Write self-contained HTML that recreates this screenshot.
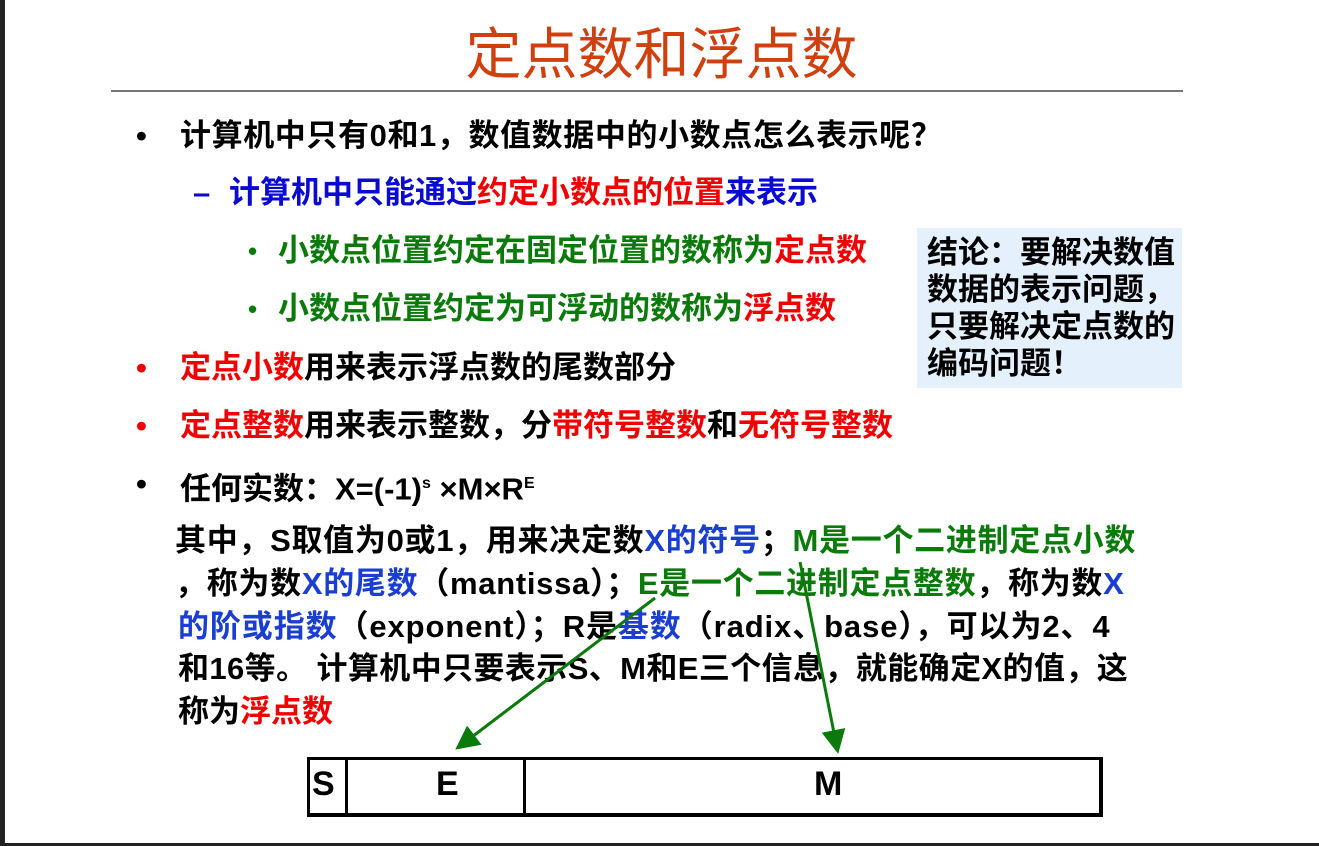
<!DOCTYPE html>
<html><head><meta charset="utf-8"><style>
html,body{margin:0;padding:0}
body{width:1319px;height:846px;background:#fff;position:relative;overflow:hidden;font-family:"Liberation Sans","Noto Sans CJK SC",sans-serif;font-weight:bold}
.l{position:absolute;white-space:nowrap;font-size:31px;line-height:40px}
.k{color:#000}.b{color:#0a0ad0}.r{color:#f00000}.g{color:#0a7a0a}.bl{color:#1a3fd0}
.t{position:absolute;left:0;width:1319px;text-align:center;top:20px;font-size:56px;line-height:70px;color:#d0400f;font-weight:normal}
</style></head><body>
<div style="position:absolute;left:0;top:0;width:5px;height:846px;background:#222"></div>
<div style="position:absolute;left:0;top:843px;width:1319px;height:3px;background:#222"></div>
<div class="t" style="left:2px">定点数和浮点数</div>
<div style="position:absolute;left:111px;top:90px;width:1072px;height:2px;background:#777"></div>

<div class="l k" style="left:136px;top:116px">•</div>
<div class="l k" style="left:180px;top:116px;letter-spacing:0.6px">计算机中只有0和1，数值数据中的小数点怎么表示呢？</div>
<div class="l b" style="left:193px;top:173px">–</div>
<div class="l" style="left:229px;top:173px"><span class="b">计算机中只能通过</span><span class="r">约定小数点的位置</span><span class="b">来表示</span></div>
<div class="l g" style="left:248px;top:231px;font-size:26px">•</div>
<div class="l" style="left:278px;top:231px"><span class="g">小数点位置约定在固定位置的数称为</span><span class="r">定点数</span></div>
<div class="l g" style="left:248px;top:289px;font-size:26px">•</div>
<div class="l" style="left:278px;top:289px"><span class="g">小数点位置约定为可浮动的数称为</span><span class="r">浮点数</span></div>
<div class="l r" style="left:136px;top:348px">•</div>
<div class="l" style="left:180px;top:348px"><span class="r">定点小数</span><span class="k">用来表示浮点数的尾数部分</span></div>
<div class="l r" style="left:136px;top:406px">•</div>
<div class="l" style="left:180px;top:406px"><span class="r">定点整数</span><span class="k">用来表示整数，分</span><span class="r">带符号整数</span><span class="k">和</span><span class="r">无符号整数</span></div>
<div class="l k" style="left:136px;top:464px">•</div>
<div class="l k" style="left:180px;top:464px">任何实数：X=(-1)<sup style="font-size:16px">s</sup> ×M×R<sup style="font-size:16px">E</sup></div>

<div class="l k" style="left:175px;top:521px;letter-spacing:0.7px">其中，S取值为0或1，用来决定数<span class="bl">X的符号</span>；<span class="g">M是一个二进制定点小数</span></div>
<div class="l k" style="left:175px;top:564px;letter-spacing:0.7px">，称为数<span class="bl">X的尾数</span>（mantissa）；<span class="g">E是一个二进制定点整数</span>，称为数<span class="bl">X</span></div>
<div class="l k" style="left:178px;top:607px;letter-spacing:0.9px"><span class="bl">的阶或指数</span>（exponent）；R是<span class="bl">基数</span>（radix、base），可以为2、4</div>
<div class="l k" style="left:178px;top:649px;letter-spacing:0.4px">和16等。 计算机中只要表示S、M和E三个信息，就能确定X的值，这</div>
<div class="l k" style="left:178px;top:692px">称为<span class="r">浮点数</span></div>

<div style="position:absolute;left:917px;top:228px;width:265px;height:160px;background:#e4f0fc"></div>
<div class="l k" style="left:927px;top:234px;line-height:37px">结论：要解决数值<br>数据的表示问题，<br>只要解决定点数的<br>编码问题！</div>

<div style="position:absolute;left:307px;top:757px;width:789px;height:53px;border:3px solid #000;border-width:3px 4px 4px 3px"></div>
<div style="position:absolute;left:345px;top:757px;width:3px;height:57px;background:#000"></div>
<div style="position:absolute;left:523px;top:757px;width:3px;height:57px;background:#000"></div>
<div class="l k" style="left:312px;top:764px;font-size:34px">S</div>
<div class="l k" style="left:436px;top:764px;font-size:34px">E</div>
<div class="l k" style="left:814px;top:764px;font-size:34px">M</div>

<svg style="position:absolute;left:0;top:0" width="1319" height="846">
<defs><marker id="a" markerWidth="8" markerHeight="8" refX="6" refY="4" orient="auto" markerUnits="strokeWidth"><path d="M0,0 L8,4 L0,8 z" fill="#0a7a0a"/></marker></defs>
<line x1="655" y1="598" x2="460" y2="746" stroke="#0a7a0a" stroke-width="3" marker-end="url(#a)"/>
<line x1="800" y1="562" x2="837" y2="748" stroke="#0a7a0a" stroke-width="3" marker-end="url(#a)"/>
</svg>
</body></html>
